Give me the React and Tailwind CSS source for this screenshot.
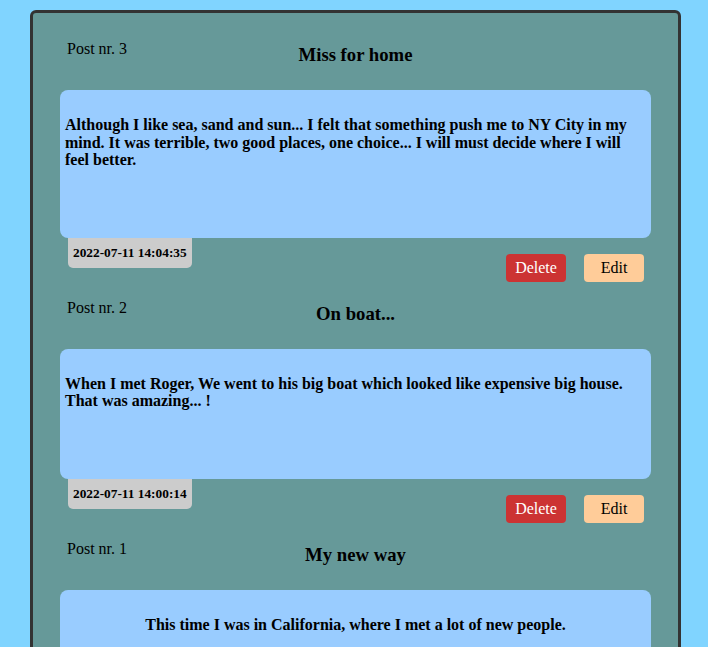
import React from "react";

const posts = [
  {
    nr: 3,
    title: "Miss for home",
    body: "Although I like sea, sand and sun... I felt that something push me to NY City in my mind. It was terrible, two good places, one choice... I will must decide where I will feel better.",
    date: "2022-07-11 14:04:35",
  },
  {
    nr: 2,
    title: "On boat...",
    body: "When I met Roger, We went to his big boat which looked like expensive big house. That was amazing... !",
    date: "2022-07-11 14:00:14",
  },
  {
    nr: 1,
    title: "My new way",
    body: "This time I was in California, where I met a lot of new people.",
    date: "2022-07-11 13:58:02",
  },
];

function Post({ post }) {
  return (
    <div className="pb-[17px]">
      <div className="grid grid-cols-[1fr_auto_1fr] items-start h-[50px]">
        <p className="ml-[7px] text-[16px] leading-[18px]">Post nr. {post.nr}</p>
        <h3 className="mt-[4px] text-[18.72px] leading-[21px] font-bold">{post.title}</h3>
        <div />
      </div>
      <div className="bg-[#99ccff] rounded-[8px] pt-[26px] pb-[69px] px-[5px] flex justify-center">
        <p className="text-[16px] leading-[17.5px] font-bold">{post.body}</p>
      </div>
      <div className="flex items-start justify-between h-[44px]">
        <div className="ml-[8px] bg-[#cccccc] rounded-b-[5px] px-[5px] pt-[7px] pb-[8px] text-[13.33px] leading-[15px] font-bold">
          {post.date}
        </div>
        <div className="flex gap-[18px] mt-[16px] mr-[7px]">
          <button className="w-[60px] h-[28px] rounded-[4px] bg-[#cc3333] text-white text-[16px] leading-[18px]">
            Delete
          </button>
          <button className="w-[60px] h-[28px] rounded-[4px] bg-[#ffcc99] text-black text-[16px] leading-[18px]">
            Edit
          </button>
        </div>
      </div>
    </div>
  );
}

export default function App() {
  return (
    <div className="min-h-screen bg-[#80d4ff] pt-[10px] pb-[20px] text-black" style={{ fontFamily: "'Liberation Serif', 'Times New Roman', serif" }}>
      <div className="ml-[30px] w-[651px] border-[3px] border-[#333333] rounded-[6px] bg-[#669999] px-[27px] pt-[27px]">
        {posts.map((p) => (
          <Post key={p.nr} post={p} />
        ))}
      </div>
    </div>
  );
}
